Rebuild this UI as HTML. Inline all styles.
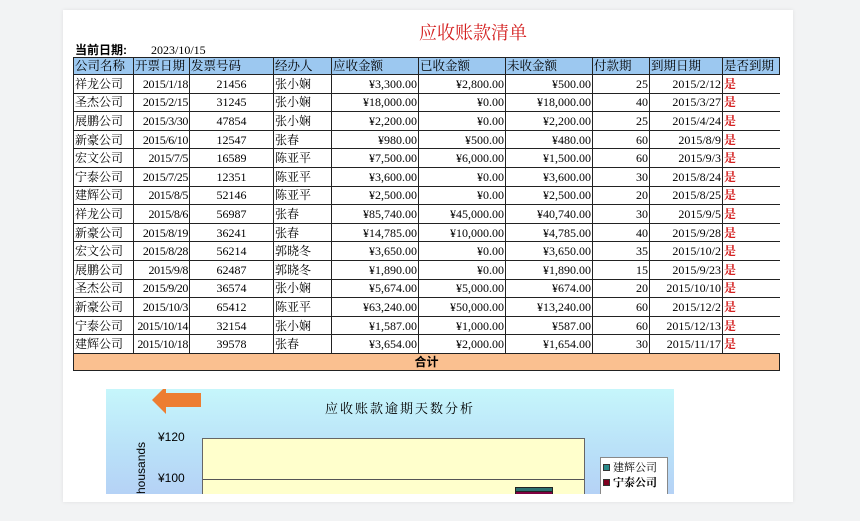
<!DOCTYPE html>
<html><head><meta charset="utf-8"><style>
*{margin:0;padding:0;box-sizing:border-box}
body{width:860px;height:521px;background:#f2f3f4;position:relative;overflow:hidden;font-family:"Liberation Serif","Noto Serif CJK SC",serif}
.card{position:absolute;left:63px;top:10px;width:730px;height:492px;background:#fff;box-shadow:0 0 4px rgba(0,0,0,.08)}
.title{position:absolute;left:0;top:19px;width:860px;text-align:center;padding-left:86px;color:#d42020;font-size:18px;font-family:"Liberation Serif","Noto Serif CJK SC",serif}
.date{position:absolute;left:75px;top:41px;font-size:12px}
.date b{font-family:"Liberation Sans","Noto Sans CJK SC",sans-serif;font-weight:bold;margin-right:24px}
table{position:absolute;left:73px;top:57px;width:706px;border-collapse:collapse;table-layout:fixed;font-size:12px}
td{border:1px solid #222;height:18.6px;padding:0 1px;white-space:nowrap;overflow:hidden;line-height:16px}
tr.h td{background:#9cc8f0;height:16px;border:1.5px solid #222;padding:0 1px;font-size:12.5px}
td.r{text-align:right}td.c{text-align:center}
tr td:nth-child(2){letter-spacing:-0.4px}
tr.h td:nth-child(2){letter-spacing:0}
td.y{color:#d42020;font-weight:bold;border-right:none}
tr.t td{background:#fac090;text-align:center;font-weight:bold;height:16px;border:1.5px solid #222;font-family:"Liberation Sans","Noto Sans CJK SC",sans-serif}
.chart{position:absolute;left:106px;top:389px;width:568px;height:105px;overflow:hidden;background:linear-gradient(#c6f6fb,#b9e0f8 60%,#b5d2f6)}
.plot{position:absolute;left:96px;top:49px;width:383px;height:70px;background:#ffffcc;border:1px solid #666}
.ct{position:absolute;left:0;width:568px;top:9px;text-align:center;padding-left:20px;font-size:13px;letter-spacing:2px}
.ax{position:absolute;font-family:"Liberation Sans",sans-serif;font-size:12px}
.leg{position:absolute;left:494px;top:68px;width:68px;height:40px;background:#fff;border:1px solid #888;font-size:11px;padding:3px 2px;line-height:15px}
.sq{display:inline-block;width:7px;height:7px;border:1px solid #333;margin-right:3px}
</style></head><body>
<div class="card"></div>
<div class="title">应收账款清单</div>
<div class="date"><b>当前日期:</b>2023/10/15</div>
<table>
<colgroup><col style="width:60px"><col style="width:56px"><col style="width:84px"><col style="width:58px"><col style="width:87px"><col style="width:87px"><col style="width:87px"><col style="width:57px"><col style="width:73px"><col style="width:57px"></colgroup>
<tr class="h"><td>公司名称</td><td>开票日期</td><td>发票号码</td><td>经办人</td><td>应收金额</td><td>已收金额</td><td>未收金额</td><td>付款期</td><td>到期日期</td><td>是否到期</td></tr>
<tr><td>祥龙公司</td><td class="r">2015/1/18</td><td class="c">21456</td><td>张小娴</td><td class="r">¥3,300.00</td><td class="r">¥2,800.00</td><td class="r">¥500.00</td><td class="r">25</td><td class="r">2015/2/12</td><td class="y">是</td></tr>
<tr><td>圣杰公司</td><td class="r">2015/2/15</td><td class="c">31245</td><td>张小娴</td><td class="r">¥18,000.00</td><td class="r">¥0.00</td><td class="r">¥18,000.00</td><td class="r">40</td><td class="r">2015/3/27</td><td class="y">是</td></tr>
<tr><td>展鹏公司</td><td class="r">2015/3/30</td><td class="c">47854</td><td>张小娴</td><td class="r">¥2,200.00</td><td class="r">¥0.00</td><td class="r">¥2,200.00</td><td class="r">25</td><td class="r">2015/4/24</td><td class="y">是</td></tr>
<tr><td>新豪公司</td><td class="r">2015/6/10</td><td class="c">12547</td><td>张春</td><td class="r">¥980.00</td><td class="r">¥500.00</td><td class="r">¥480.00</td><td class="r">60</td><td class="r">2015/8/9</td><td class="y">是</td></tr>
<tr><td>宏文公司</td><td class="r">2015/7/5</td><td class="c">16589</td><td>陈亚平</td><td class="r">¥7,500.00</td><td class="r">¥6,000.00</td><td class="r">¥1,500.00</td><td class="r">60</td><td class="r">2015/9/3</td><td class="y">是</td></tr>
<tr><td>宁泰公司</td><td class="r">2015/7/25</td><td class="c">12351</td><td>陈亚平</td><td class="r">¥3,600.00</td><td class="r">¥0.00</td><td class="r">¥3,600.00</td><td class="r">30</td><td class="r">2015/8/24</td><td class="y">是</td></tr>
<tr><td>建辉公司</td><td class="r">2015/8/5</td><td class="c">52146</td><td>陈亚平</td><td class="r">¥2,500.00</td><td class="r">¥0.00</td><td class="r">¥2,500.00</td><td class="r">20</td><td class="r">2015/8/25</td><td class="y">是</td></tr>
<tr><td>祥龙公司</td><td class="r">2015/8/6</td><td class="c">56987</td><td>张春</td><td class="r">¥85,740.00</td><td class="r">¥45,000.00</td><td class="r">¥40,740.00</td><td class="r">30</td><td class="r">2015/9/5</td><td class="y">是</td></tr>
<tr><td>新豪公司</td><td class="r">2015/8/19</td><td class="c">36241</td><td>张春</td><td class="r">¥14,785.00</td><td class="r">¥10,000.00</td><td class="r">¥4,785.00</td><td class="r">40</td><td class="r">2015/9/28</td><td class="y">是</td></tr>
<tr><td>宏文公司</td><td class="r">2015/8/28</td><td class="c">56214</td><td>郭晓冬</td><td class="r">¥3,650.00</td><td class="r">¥0.00</td><td class="r">¥3,650.00</td><td class="r">35</td><td class="r">2015/10/2</td><td class="y">是</td></tr>
<tr><td>展鹏公司</td><td class="r">2015/9/8</td><td class="c">62487</td><td>郭晓冬</td><td class="r">¥1,890.00</td><td class="r">¥0.00</td><td class="r">¥1,890.00</td><td class="r">15</td><td class="r">2015/9/23</td><td class="y">是</td></tr>
<tr><td>圣杰公司</td><td class="r">2015/9/20</td><td class="c">36574</td><td>张小娴</td><td class="r">¥5,674.00</td><td class="r">¥5,000.00</td><td class="r">¥674.00</td><td class="r">20</td><td class="r">2015/10/10</td><td class="y">是</td></tr>
<tr><td>新豪公司</td><td class="r">2015/10/3</td><td class="c">65412</td><td>陈亚平</td><td class="r">¥63,240.00</td><td class="r">¥50,000.00</td><td class="r">¥13,240.00</td><td class="r">60</td><td class="r">2015/12/2</td><td class="y">是</td></tr>
<tr><td>宁泰公司</td><td class="r">2015/10/14</td><td class="c">32154</td><td>张小娴</td><td class="r">¥1,587.00</td><td class="r">¥1,000.00</td><td class="r">¥587.00</td><td class="r">60</td><td class="r">2015/12/13</td><td class="y">是</td></tr>
<tr><td>建辉公司</td><td class="r">2015/10/18</td><td class="c">39578</td><td>张春</td><td class="r">¥3,654.00</td><td class="r">¥2,000.00</td><td class="r">¥1,654.00</td><td class="r">30</td><td class="r">2015/11/17</td><td class="y">是</td></tr>
<tr class="t"><td colspan="10">合计</td></tr>
</table>
<div class="chart">
<svg style="position:absolute;left:46px;top:-4px" width="50" height="30"><polygon points="0,15 14,1 14,8 49,8 49,22 14,22 14,29" fill="#ed7d31"/></svg>
<div class="ct">应收账款逾期天数分析</div>
<div class="ax" style="left:52px;top:41px">¥120</div>
<div class="ax" style="left:52px;top:82px">¥100</div>
<div class="ax" style="left:28px;transform:rotate(-90deg);transform-origin:0 0;top:105px">housands</div>
<div class="plot"><div style="position:absolute;left:0;right:0;top:40px;border-top:1px solid #555"></div>
<div style="position:absolute;left:312px;top:48px;width:38px;height:20px;border:1px solid #222;background:linear-gradient(#2a7070 0 3px,#222 3px 4px,#800040 4px)"></div></div>
<div class="leg"><div><span class="sq" style="background:#2a8a8a"></span>建辉公司</div><div><span class="sq" style="background:#800020"></span><b>宁泰公司</b></div></div>
</div>
</body></html>
